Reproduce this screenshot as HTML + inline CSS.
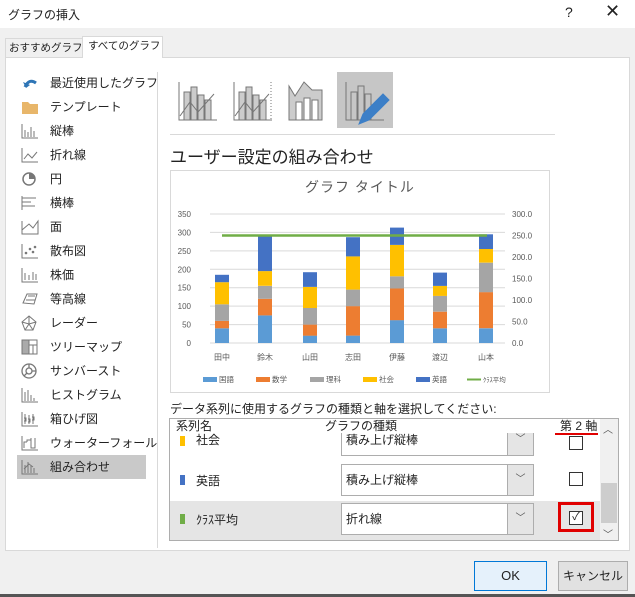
<!DOCTYPE html>
<html><head><meta charset="utf-8"><style>
*{margin:0;padding:0;box-sizing:border-box}
body{width:635px;height:597px;background:#f0f0f0;font-family:"Liberation Sans","Noto Sans CJK JP",sans-serif;position:relative;overflow:hidden;color:#222;white-space:nowrap}
.a{position:absolute}
.li{position:absolute;left:17px;width:129px;height:24px;font-size:12px;line-height:24px}
.li span{position:absolute;left:33px}
.li svg{position:absolute;left:4px;top:4px}
.dd{position:absolute;left:341px;width:193px;height:32px;background:#fff;border:1px solid #adadad;font-size:12px;line-height:30px;padding-left:4px}
.dd i{position:absolute;right:0;top:0;width:26px;height:30px;background:#e5e5e5;border-left:1px solid #adadad;font-style:normal;text-align:center;font-size:10px;color:#555}
.cb{position:absolute;left:569px;width:14px;height:14px;border:1px solid #333;background:#fff}
</style></head><body>
<div class="a" style="left:0;top:0;width:635px;height:28px;background:#fff"></div>
<div class="a" style="left:8px;top:6px;font-size:12px">グラフの挿入</div>
<div class="a" style="left:565px;top:4px;font-size:14px">?</div>
<div class="a" style="left:605px;top:1px;font-size:18px;font-weight:300">✕</div>
<div class="a" style="left:5px;top:38px;width:78px;height:19px;border:1px solid #d9d9d9;border-bottom:none;font-size:10.5px;line-height:18px;padding-left:3px;overflow:hidden">おすすめグラフ</div>
<div class="a" style="left:82px;top:36px;width:81px;height:22px;background:#fff;border:1px solid #d9d9d9;border-bottom:none;font-size:10.5px;line-height:19px;padding-left:5px;z-index:2;overflow:hidden">すべてのグラフ</div>
<div class="a" style="left:5px;top:57px;width:625px;height:494px;background:#fff;border:1px solid #d9d9d9"></div>
<div class="a" style="left:157px;top:72px;width:1px;height:476px;background:#d9d9d9"></div>

<div class="li" style="top:71px"><svg width="18" height="16"><path d="M4 12 Q8 3 15 8" stroke="#2e75b6" stroke-width="3" fill="none"/><path d="M2 7 L5 13 L9 10Z" fill="#2e75b6"/></svg><span>最近使用したグラフ</span></div>
<div class="li" style="top:95px"><svg width="18" height="16"><path d="M1 3h6l2 2h8v10H1z" fill="#e8b66a"/></svg><span>テンプレート</span></div>
<div class="li" style="top:119px"><svg width="18" height="16" fill="none" stroke="#777"><path d="M1 1v14h16M4 14V7M7 14V9M10 14V4M13 14V8"/></svg><span>縦棒</span></div>
<div class="li" style="top:143px"><svg width="18" height="16" fill="none" stroke="#777"><path d="M1 1v14h16M3 12l4-5 4 4 5-6"/></svg><span>折れ線</span></div>
<div class="li" style="top:167px"><svg width="18" height="16"><circle cx="8" cy="8" r="6" fill="#fff" stroke="#777" stroke-width="1.5"/><path d="M8 8V2A6 6 0 0 1 14 8z" fill="#777"/></svg><span>円</span></div>
<div class="li" style="top:191px"><svg width="18" height="16" fill="none" stroke="#777"><path d="M1 1v14M1 3h14M1 7h9M1 11h13"/></svg><span>横棒</span></div>
<div class="li" style="top:215px"><svg width="18" height="16" fill="none" stroke="#777"><path d="M1 2v13h16V2l-5 7-4-4-7 6"/></svg><span>面</span></div>
<div class="li" style="top:239px"><svg width="18" height="16" fill="#999" stroke="#777"><path d="M1 1v14h16" fill="none"/><circle cx="5" cy="10" r=".8"/><circle cx="9" cy="6" r=".8"/><circle cx="12" cy="9" r=".8"/><circle cx="14" cy="4" r=".8"/></svg><span>散布図</span></div>
<div class="li" style="top:263px"><svg width="18" height="16" fill="none" stroke="#777"><path d="M1 1v14h16M4 13V6M8 13V8M12 13V5M15 13V7"/></svg><span>株価</span></div>
<div class="li" style="top:287px"><svg width="18" height="16" fill="none" stroke="#777"><path d="M2 12l4-9h10l-3 10z M5 9h9M7 5h7"/></svg><span>等高線</span></div>
<div class="li" style="top:311px"><svg width="18" height="16" fill="none" stroke="#777"><path d="M8 1l7 6-3 8H4L1 7z M8 1v8M1 7l7 2 7-2M4 15l4-6 4 6"/></svg><span>レーダー</span></div>
<div class="li" style="top:335px"><svg width="18" height="16" fill="#aaa" stroke="#777"><rect x="1" y="1" width="15" height="14" fill="none"/><rect x="1" y="1" width="7" height="14"/><path d="M8 6h8M12 6v9" fill="none"/></svg><span>ツリーマップ</span></div>
<div class="li" style="top:359px"><svg width="18" height="16" fill="none" stroke="#777" stroke-width="1.3"><circle cx="8" cy="8" r="7"/><circle cx="8" cy="8" r="3"/><path d="M8 1v4M11 8h4M3 13l3-3"/></svg><span>サンバースト</span></div>
<div class="li" style="top:383px"><svg width="18" height="16" fill="none" stroke="#777"><path d="M1 1v14h16M4 14V5M7 14V3M10 14V8M13 14V11"/></svg><span>ヒストグラム</span></div>
<div class="li" style="top:407px"><svg width="18" height="16" fill="none" stroke="#777"><path d="M1 1v14h16M4 3v10M8 4v9M12 3v10M3 7h2v3H3M7 8h2v3H7M11 6h2v3h-2"/></svg><span>箱ひげ図</span></div>
<div class="li" style="top:431px"><svg width="18" height="16" fill="none" stroke="#777"><path d="M1 1v14h16M3 13V7h3M6 7V5h4M10 3v10h4V3"/></svg><span>ウォーターフォール</span></div>
<div class="li" style="top:455px;background:#c9c9c9"><svg width="18" height="16" fill="none" stroke="#777"><path d="M1 1v14h16M4 14V6M7 14V3M10 14V7M13 14V9M3 10l5-5 4 3"/></svg><span>組み合わせ</span></div>

<svg class="a" style="left:170px;top:72px" width="230" height="58" fill="none" stroke="#777">
<g transform="translate(8,10)"><path d="M1 0v38h38" /><rect x="6" y="10" width="6" height="28" fill="#ccc"/><rect x="13" y="5" width="6" height="33" fill="#ccc"/><rect x="20" y="13" width="6" height="25" fill="#ccc"/><rect x="27" y="18" width="6" height="20" fill="#ccc"/><path d="M2 34l10-14 8 10 16-18"/></g>
<g transform="translate(63,10)"><path d="M1 0v38h38" /><rect x="6" y="10" width="6" height="28" fill="#ccc"/><rect x="13" y="5" width="6" height="33" fill="#ccc"/><rect x="20" y="13" width="6" height="25" fill="#ccc"/><rect x="27" y="18" width="6" height="20" fill="#ccc"/><path d="M2 34l10-14 8 10 16-18"/><path d="M38 0v38" stroke-dasharray="1 2"/></g>
<g transform="translate(118,10)"><path d="M1 4l6 10 9-14 8 8 10 0v30H1z" fill="#ccc"/><rect x="8" y="20" width="6" height="18" fill="#fff"/><rect x="16" y="16" width="6" height="22" fill="#fff"/><rect x="24" y="18" width="6" height="20" fill="#fff"/></g>
</svg>
<div class="a" style="left:337px;top:72px;width:56px;height:56px;background:#c6c6c6"></div>
<svg class="a" style="left:337px;top:72px" width="56" height="56" fill="none" stroke="#777">
<path d="M9 10v38h38"/><rect x="14" y="20" width="6" height="28"/><rect x="21" y="14" width="6" height="34"/><rect x="28" y="22" width="6" height="26"/>
<path d="M22 52l4-10 20-20 6 6-20 20z" fill="#3c7fc7" stroke="#3c7fc7"/>
</svg>
<div class="a" style="left:170px;top:134px;width:385px;height:1px;background:#d9d9d9"></div>
<div class="a" style="left:170px;top:143px;font-size:17px">ユーザー設定の組み合わせ</div>

<svg class="a" style="left:170px;top:170px" width="380" height="223" font-family="Liberation Sans,Noto Sans CJK JP,sans-serif">
<rect x=".5" y=".5" width="379" height="222" fill="#fff" stroke="#d9d9d9"/>
<text x="190" y="22" font-size="14" fill="#595959" text-anchor="middle" letter-spacing="1">グラフ タイトル</text>
<g stroke="#d9d9d9"><path d="M40 44h295M40 62.4h295M40 80.9h295M40 99.3h295M40 117.7h295M40 136.1h295M40 154.6h295M40 173h295"/></g>
<g font-size="8" fill="#595959" text-anchor="end">
<text x="21" y="47">350</text><text x="21" y="65.4">300</text><text x="21" y="84">250</text><text x="21" y="102.3">200</text><text x="21" y="120.7">150</text><text x="21" y="139">100</text><text x="21" y="157.6">50</text><text x="21" y="176">0</text></g>
<g font-size="8" fill="#595959">
<text x="342" y="47">300.0</text><text x="342" y="68.5">250.0</text><text x="342" y="90">200.0</text><text x="342" y="111.5">150.0</text><text x="342" y="133">100.0</text><text x="342" y="154.5">50.0</text><text x="342" y="176">0.0</text></g>
<g id="bars"></g>
<path d="M52 65.5H317" stroke="#70ad47" stroke-width="2.5"/>
<g font-size="8" fill="#595959" text-anchor="middle">
<text x="52" y="190">田中</text><text x="95" y="190">鈴木</text><text x="140" y="190">山田</text><text x="183" y="190">志田</text><text x="227" y="190">伊藤</text><text x="270" y="190">渡辺</text><text x="316" y="190">山本</text></g>
<g font-size="7.5" fill="#595959">
<rect x="33" y="207" width="14" height="5" fill="#5b9bd5"/><text x="49" y="212">国語</text>
<rect x="86" y="207" width="14" height="5" fill="#ed7d31"/><text x="102" y="212">数学</text>
<rect x="140" y="207" width="14" height="5" fill="#a5a5a5"/><text x="156" y="212">理科</text>
<rect x="193" y="207" width="14" height="5" fill="#ffc000"/><text x="209" y="212">社会</text>
<rect x="246" y="207" width="14" height="5" fill="#4472c4"/><text x="262" y="212">英語</text>
<path d="M297 209.5h14" stroke="#70ad47" stroke-width="2"/><text x="313" y="212" font-size="6.5">ｸﾗｽ平均</text></g>
</svg>
<script>
var d=[[40,20,45,60,20],[75,45,35,40,95],[20,30,45,57,40],[20,80,45,90,52],[62,86,33,85,47],[40,45,43,27,36],[40,98,80,37,40]];
var xs=[52,95,140,183,227,270,316],c=["#5b9bd5","#ed7d31","#a5a5a5","#ffc000","#4472c4"],k=129/350,s="";
d.forEach(function(r,i){var y=173;r.forEach(function(v,j){var h=v*k;y-=h;s+='<rect x="'+(xs[i]-7)+'" y="'+y.toFixed(1)+'" width="14" height="'+h.toFixed(1)+'" fill="'+c[j]+'"/>';});});
document.getElementById('bars').innerHTML=s;
</script>

<div class="a" style="left:170px;top:400px;font-size:12px">データ系列に使用するグラフの種類と軸を選択してください:</div>
<div class="a" style="left:169px;top:418px;width:450px;height:123px;border:1px solid #adadad;background:#fff;overflow:hidden">
 <div class="a" style="left:0;top:82px;width:431px;height:39px;background:#e5e5e5"></div>
 <div class="a" style="left:10px;top:17px;width:5px;height:10px;background:#ffc000"></div>
 <div class="a" style="left:26px;top:12px;font-size:12px">社会</div>
 <div class="dd" style="left:171px;top:5px;height:32px;line-height:30px"><i>﹀</i>積み上げ縦棒</div>
 <div class="cb" style="left:399px;top:17px"></div>
 <div class="a" style="left:0;top:0;width:430px;height:14px;background:#fff"></div>
 <div class="a" style="left:6px;top:0;font-size:12px;line-height:14px">系列名</div>
 <div class="a" style="left:155px;top:0;font-size:12px;line-height:14px">グラフの種類</div>
 <div class="a" style="left:390px;top:0;font-size:12px;line-height:14px">第 2 軸</div>
 <div class="a" style="left:385px;top:14px;width:43px;height:2px;background:#e00000"></div>
</div>
<div class="a" style="left:180px;top:475px;width:5px;height:10px;background:#4472c4"></div>
<div class="a" style="left:196px;top:472px;font-size:12px">英語</div>
<div class="dd" style="top:464px"><i>﹀</i>積み上げ縦棒</div>
<div class="cb" style="top:472px"></div>
<div class="a" style="left:180px;top:514px;width:5px;height:10px;background:#70ad47"></div>
<div class="a" style="left:196px;top:511px;font-size:12px">ｸﾗｽ平均</div>
<div class="dd" style="top:503px"><i>﹀</i>折れ線</div>
<div class="cb" style="top:511px;font-size:11px;line-height:11px;text-align:center">✓</div>
<div class="a" style="left:558px;top:502px;width:36px;height:30px;border:3px solid #e00000"></div>
<div class="a" style="left:600px;top:419px;width:18px;height:121px;background:#f0f0f0"></div>
<div class="a" style="left:601px;top:483px;width:16px;height:40px;background:#cdcdcd"></div>
<div class="a" style="left:603px;top:421px;font-size:10px;color:#555">︿</div>
<div class="a" style="left:603px;top:526px;font-size:10px;color:#555">﹀</div>

<div class="a" style="left:474px;top:561px;width:73px;height:30px;background:#e5f1fb;border:1px solid #0078d7;font-size:13px;text-align:center;line-height:28px">OK</div>
<div class="a" style="left:558px;top:561px;width:70px;height:30px;background:#e1e1e1;border:1px solid #adadad;font-size:12px;text-align:center;line-height:28px">キャンセル</div>
<div class="a" style="left:0;top:594px;width:635px;height:3px;background:#555"></div>
</body></html>
